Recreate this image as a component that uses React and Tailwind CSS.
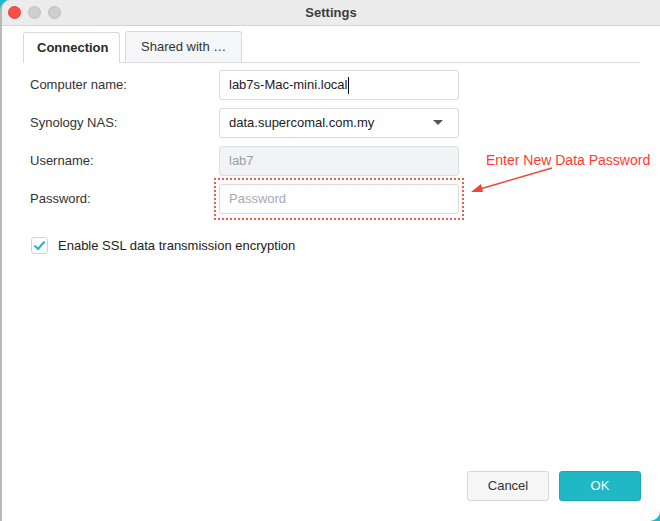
import React from 'react';

const Row = ({ label, children }) => (
  <div className="flex items-center h-[30px] mb-[8px]">
    <div className="w-[217px] pl-[28px] text-[13px] text-[#333]">{label}</div>
    {children}
  </div>
);

const App = () => {
  return (
    <div className="relative w-[660px] h-[521px] bg-[#1fb8c4] overflow-hidden" style={{ fontFamily: '"Liberation Sans", Arial, sans-serif' }}>
      <div className="absolute inset-0 bg-white rounded-tl-[10px] rounded-br-[10px] border-l-2 border-[#b9b9b9] flex flex-col">
        {/* title bar */}
        <div className="relative h-[26px] bg-[#ececec] border-b border-[#d4d4d4] rounded-tl-[10px] flex items-center shrink-0">
          <div className="flex gap-[7px] pl-[6px]">
            <span className="w-[13px] h-[13px] rounded-full bg-[#fe4e4a] border border-[#e2413d]" />
            <span className="w-[13px] h-[13px] rounded-full bg-[#cfcfcf] border border-[#bfbfbf]" />
            <span className="w-[13px] h-[13px] rounded-full bg-[#cfcfcf] border border-[#bfbfbf]" />
          </div>
          <div className="absolute inset-0 flex items-center justify-center text-[13px] font-bold text-[#3d3d3d]">Settings</div>
        </div>

        {/* tabs */}
        <div className="flex items-end h-[37px] ml-[21px] mr-[20px] border-b border-[#dcdcdc] shrink-0">
          <div className="h-[31px] w-[97px] bg-white border border-b-0 border-[#d9d9d9] rounded-t-[3px] flex items-center pl-[13px] text-[13px] font-bold text-[#2a2a2a] -mb-px">
            Connection
          </div>
          <div className="h-[31px] w-[117px] ml-[5px] bg-[#f5f6f8] border border-b-0 border-[#d9d9d9] rounded-t-[3px] flex items-center pl-[15px] text-[13px] text-[#333]">
            Shared with …
          </div>
        </div>

        {/* form */}
        <div className="pt-[7px]">
          <Row label="Computer name:">
            <div className="w-[240px] h-[30px] border border-[#d9d9d9] rounded-[3px] flex items-center px-[9px] text-[13px] text-[#222]">
              lab7s-Mac-mini.local<span className="inline-block w-px h-[17px] bg-black ml-px" />
            </div>
          </Row>
          <Row label="Synology NAS:">
            <div className="w-[240px] h-[30px] border border-[#d9d9d9] rounded-[3px] flex items-center justify-between px-[9px] text-[13px] text-[#222]">
              data.supercomal.com.my
              <svg width="10" height="6" viewBox="0 0 10 6" className="mr-[6px]"><path d="M0 0h10L5 5z" fill="#555" /></svg>
            </div>
          </Row>
          <Row label="Username:">
            <div className="w-[240px] h-[30px] border border-[#dde0e3] bg-[#f1f3f5] rounded-[3px] flex items-center px-[9px] text-[13px] text-[#9aa0a6]">
              lab7
            </div>
          </Row>
          <Row label="Password:">
            <div className="relative">
              <div className="absolute -left-[5px] -top-[6px] w-[250px] h-[42px] border-2 border-dotted border-[#f4574b]" />
              <div className="w-[240px] h-[30px] border border-[#d9d9d9] rounded-[3px] flex items-center px-[9px] text-[13px] text-[#a6abb0]">
                Password
              </div>
            </div>
          </Row>

          <div className="flex items-center mt-[22px] pl-[29px]">
            <div className="w-[17px] h-[17px] border border-[#cfd3d6] rounded-[3px] flex items-center justify-center">
              <svg width="13" height="11" viewBox="0 0 13 11"><path d="M1.5 5.5l3.5 3.5 6.5-7.5" stroke="#1fb8c4" strokeWidth="2" fill="none" /></svg>
            </div>
            <span className="ml-[10px] text-[13px] text-[#222]">Enable SSL data transmission encryption</span>
          </div>
        </div>

        {/* annotation */}
        <div className="absolute left-[484px] top-[150px] text-[14px] text-[#ff3b30]">Enter New Data Password</div>
        <svg className="absolute -left-[2px] top-0" width="660" height="521" style={{ pointerEvents: 'none' }}>
          <line x1="552" y1="168" x2="480" y2="189" stroke="#f0453a" strokeWidth="1.5" />
          <path d="M471 192 L481 184 L483 192 Z" fill="#f0453a" />
        </svg>

        {/* buttons */}
        <div className="mt-auto flex justify-end gap-[10px] pr-[19px] pb-[20px]">
          <button className="w-[82px] h-[30px] bg-[#f5f6f8] border border-[#d6d8db] rounded-[3px] text-[13px] text-[#333]">Cancel</button>
          <button className="w-[82px] h-[30px] bg-[#1fb8c4] border border-[#1aa9b4] rounded-[3px] text-[13px] text-white">OK</button>
        </div>
      </div>
    </div>
  );
};

export default App;
